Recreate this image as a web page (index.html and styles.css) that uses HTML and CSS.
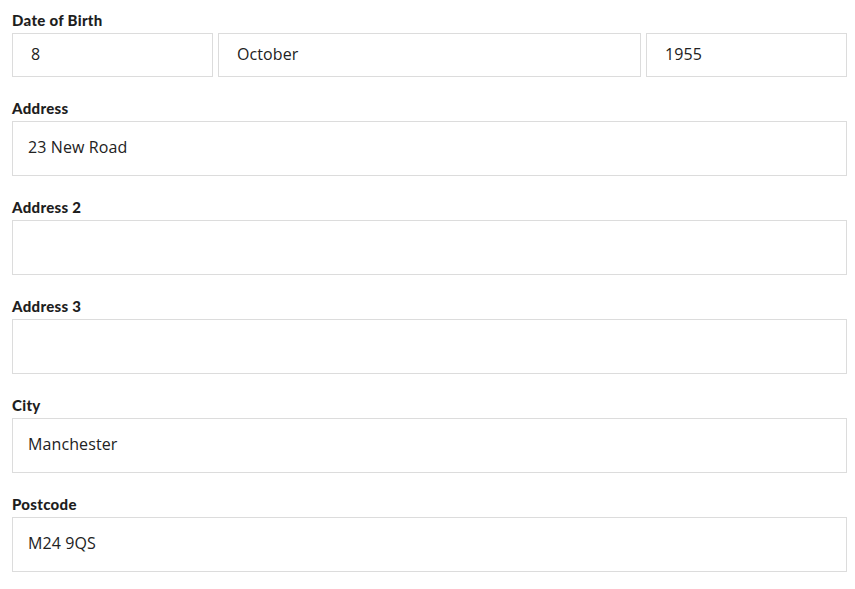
FILE: index.html
```html
<!DOCTYPE html>
<html lang="en">
<head>
<meta charset="utf-8">
<title>Details</title>
<link rel="stylesheet" href="styles.css">
</head>
<body>
<form class="form">
  <div class="group">
    <label class="label">Date of Birth</label>
    <div class="dob">
      <div class="field field-dob">8</div>
      <div class="field field-dob">October</div>
      <div class="field field-dob">1955</div>
    </div>
  </div>
  <div class="group">
    <label class="label">Address</label>
    <div class="field">23 New Road</div>
  </div>
  <div class="group">
    <label class="label">Address 2</label>
    <div class="field"></div>
  </div>
  <div class="group">
    <label class="label">Address 3</label>
    <div class="field"></div>
  </div>
  <div class="group">
    <label class="label">City</label>
    <div class="field">Manchester</div>
  </div>
  <div class="group">
    <label class="label">Postcode</label>
    <div class="field">M24 9QS</div>
  </div>
</form>
</body>
</html>
```
FILE: styles.css
```css
html, body {
  margin: 0;
  padding: 0;
  background: #fff;
}
body {
  padding: 10px 9px 0 12px;
}
.form {
  width: 835px;
  display: flex;
  flex-direction: column;
  gap: 21px;
}
.group {
  display: flex;
  flex-direction: column;
  gap: 3px;
}
.label {
  display: block;
  font-family: "Lato", sans-serif;
  font-weight: 900;
  font-size: 15px;
  line-height: 20px;
  letter-spacing: 0.3px;
  color: #1e1e1e;
}
.dob {
  display: grid;
  grid-template-columns: 201px 1fr 201px;
  gap: 5px;
}
.field {
  box-sizing: border-box;
  height: 55px;
  border: 1px solid #dcdcdc;
  background: #fff;
  padding: 0 15px 3px;
  display: flex;
  align-items: center;
  font-family: "Open Sans", sans-serif;
  font-size: 16px;
  letter-spacing: 0.1px;
  color: #222;
}
.field-dob {
  height: 44px;
  padding: 0 19px 2px 18px;
}
```
